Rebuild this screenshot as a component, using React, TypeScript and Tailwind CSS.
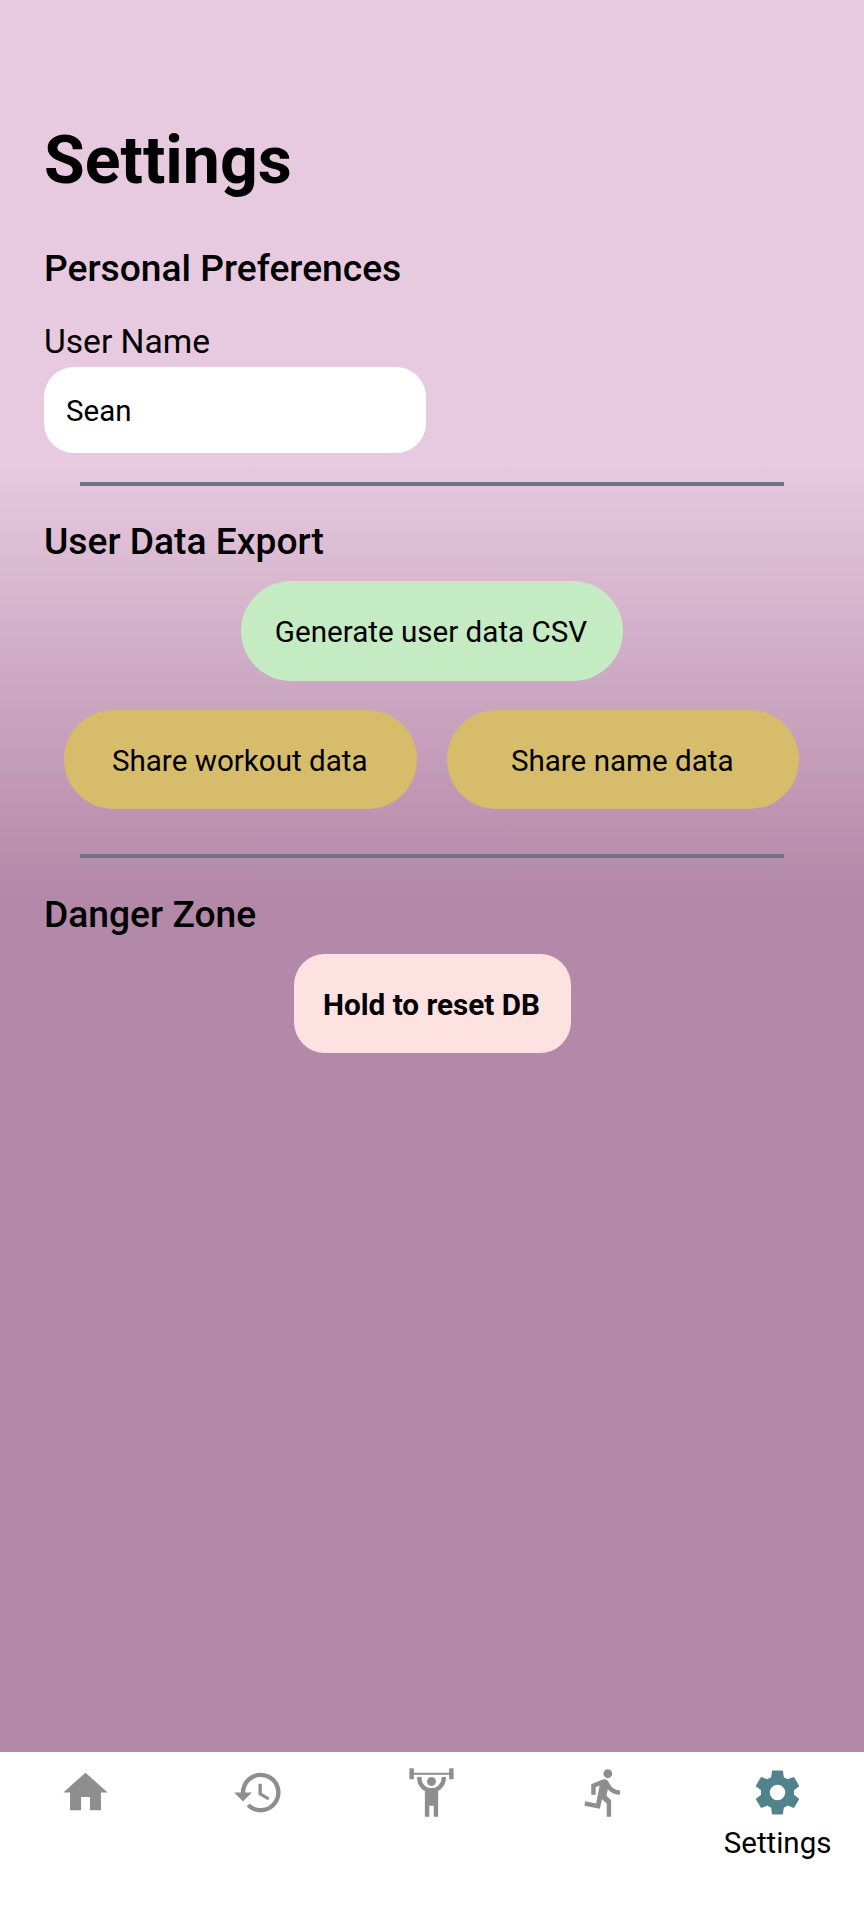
import type { ReactNode } from "react";

const icons = {
  home: "M10,20V14H14V20H19V12H22L12,3L2,12H5V20H10Z",
  history:
    "M13.5,8H12V13L16.28,15.54L17,14.33L13.5,12.25V8M13,3A9,9 0 0,0 4,12H1L4.96,16.03L9,12H6A7,7 0 0,1 13,5A7,7 0 0,1 20,12A7,7 0 0,1 13,19C11.07,19 9.32,18.21 8.06,16.94L6.64,18.36C8.27,20 10.5,21 13,21A9,9 0 0,0 22,12A9,9 0 0,0 13,3",
  lifter:
    "M12 5C10.89 5 10 5.89 10 7S10.89 9 12 9 14 8.11 14 7 13.11 5 12 5M22 1V6H20V4H4V6H2V1H4V3H20V1H22M15 11.26V23H13V18H11V23H9V11.26C6.93 10.17 5.5 8 5.5 5.5L5.5 5H7.5L7.5 5.5C7.5 8 9.5 10 12 10S16.5 8 16.5 5.5L16.5 5H18.5L18.5 5.5C18.5 8 17.07 10.17 15 11.26Z",
  run: "M13.5,5.5C14.59,5.5 15.5,4.58 15.5,3.5C15.5,2.38 14.59,1.5 13.5,1.5C12.39,1.5 11.5,2.38 11.5,3.5C11.5,4.58 12.39,5.5 13.5,5.5M9.89,19.38L10.89,15L13,17V23H15V15.5L12.89,13.5L13.5,10.5C14.79,12 16.79,13 19,13V11C17.09,11 15.5,10 14.69,8.58L13.69,7C13.29,6.38 12.69,6 12,6C11.69,6 11.5,6.08 11.19,6.08L6,8.28V13H8V9.58L9.79,8.88L8.19,17L3.29,16L2.89,18L9.89,19.38Z",
  cog: "M12,15.5A3.5,3.5 0 0,1 8.5,12A3.5,3.5 0 0,1 12,8.5A3.5,3.5 0 0,1 15.5,12A3.5,3.5 0 0,1 12,15.5M19.43,12.97C19.47,12.65 19.5,12.33 19.5,12C19.5,11.67 19.47,11.34 19.43,11L21.54,9.37C21.73,9.22 21.78,8.95 21.66,8.73L19.66,5.27C19.54,5.05 19.27,4.96 19.05,5.05L16.56,6.05C16.04,5.66 15.5,5.32 14.87,5.07L14.5,2.42C14.46,2.18 14.25,2 14,2H10C9.75,2 9.54,2.18 9.5,2.42L9.13,5.07C8.5,5.32 7.96,5.66 7.44,6.05L4.95,5.05C4.73,4.96 4.46,5.05 4.34,5.27L2.34,8.73C2.21,8.95 2.27,9.22 2.46,9.37L4.57,11C4.53,11.34 4.5,11.67 4.5,12C4.5,12.33 4.53,12.65 4.57,12.97L2.46,14.63C2.27,14.78 2.21,15.05 2.34,15.27L4.34,18.73C4.46,18.95 4.73,19.03 4.95,18.95L7.44,17.94C7.96,18.34 8.5,18.68 9.13,18.93L9.5,21.58C9.54,21.82 9.75,22 10,22H14C14.25,22 14.46,21.82 14.5,21.58L14.87,18.93C15.5,18.67 16.04,18.34 16.56,17.94L19.05,18.95C19.27,19.03 19.54,18.95 19.66,18.73L21.66,15.27C21.78,15.05 21.73,14.78 21.54,14.63L19.43,12.97Z",
};

function Tab({ icon, label }: { icon: keyof typeof icons; label?: string }) {
  return (
    <button className={`flex flex-1 flex-col items-center pt-[14px] ${label ? "text-[#52838c]" : "text-[#8e8e8f]"}`}>
      <svg viewBox="0 0 24 24" className="mr-px size-[53px]" fill="currentColor">
        <path d={icons[icon]} />
      </svg>
      {label && <span className="mt-[6px] text-[29.5px] leading-[36px] text-black">{label}</span>}
    </button>
  );
}

function Heading({ children }: { children: ReactNode }) {
  return <h2 className="text-[37.2px] leading-[44px] font-medium">{children}</h2>;
}

function Divider() {
  return <hr className="mr-[36px] ml-[35.5px] h-[4px] border-0 bg-[#6f7284]" />;
}

export default function App() {
  return (
    <div className="flex h-[1920px] w-[864px] flex-col bg-white font-['Roboto',sans-serif] text-black">
      <main className="flex-1 bg-[linear-gradient(to_bottom,#e7cadf_0px,#e7cadf_462px,#b388a8_895px)] px-[44px] pt-[120px]">
        <h1 className="text-[66.2px] leading-[81px] font-bold">Settings</h1>
        <div className="mt-[45px]">
          <Heading>Personal Preferences</Heading>
        </div>
        <label className="mt-[32px] block text-[33.6px] leading-[40px]">User Name</label>
        <div className="mt-[5px] flex h-[86px] w-[382px] items-center rounded-[30px] bg-white px-[22px] pt-[2px] text-[29.5px]">
          Sean
        </div>
        <div className="mt-[29px]">
          <Divider />
        </div>
        <div className="mt-[33px]">
          <Heading>User Data Export</Heading>
        </div>
        <button className="mx-auto mt-[18px] flex h-[100px] w-[382px] items-center justify-center rounded-full bg-[#c5ebc3] pt-[2px] pr-[2px] text-[29.6px]">
          Generate user data CSV
        </button>
        <div className="mr-px mt-[29px] flex justify-center gap-[30px]">
          <button className="h-[99px] w-[352.5px] rounded-full bg-[#d7bd6b] pt-[3px] pr-px text-[29.6px]">
            Share workout data
          </button>
          <button className="h-[99px] w-[352.5px] rounded-full bg-[#d7bd6b] pt-[3px] pr-px text-[29.6px]">
            Share name data
          </button>
        </div>
        <div className="mt-[45px]">
          <Divider />
        </div>
        <div className="mt-[34px]">
          <Heading>Danger Zone</Heading>
        </div>
        <button className="mx-auto mt-[18px] flex h-[99px] w-[277px] items-center justify-center rounded-[31px] bg-[#fee1e1] pt-[4px] pr-px text-[29.7px] font-bold">
          Hold to reset DB
        </button>
      </main>
      <nav className="flex h-[168px] bg-white">
        <Tab icon="home" />
        <Tab icon="history" />
        <Tab icon="lifter" />
        <Tab icon="run" />
        <Tab icon="cog" label="Settings" />
      </nav>
    </div>
  );
}
